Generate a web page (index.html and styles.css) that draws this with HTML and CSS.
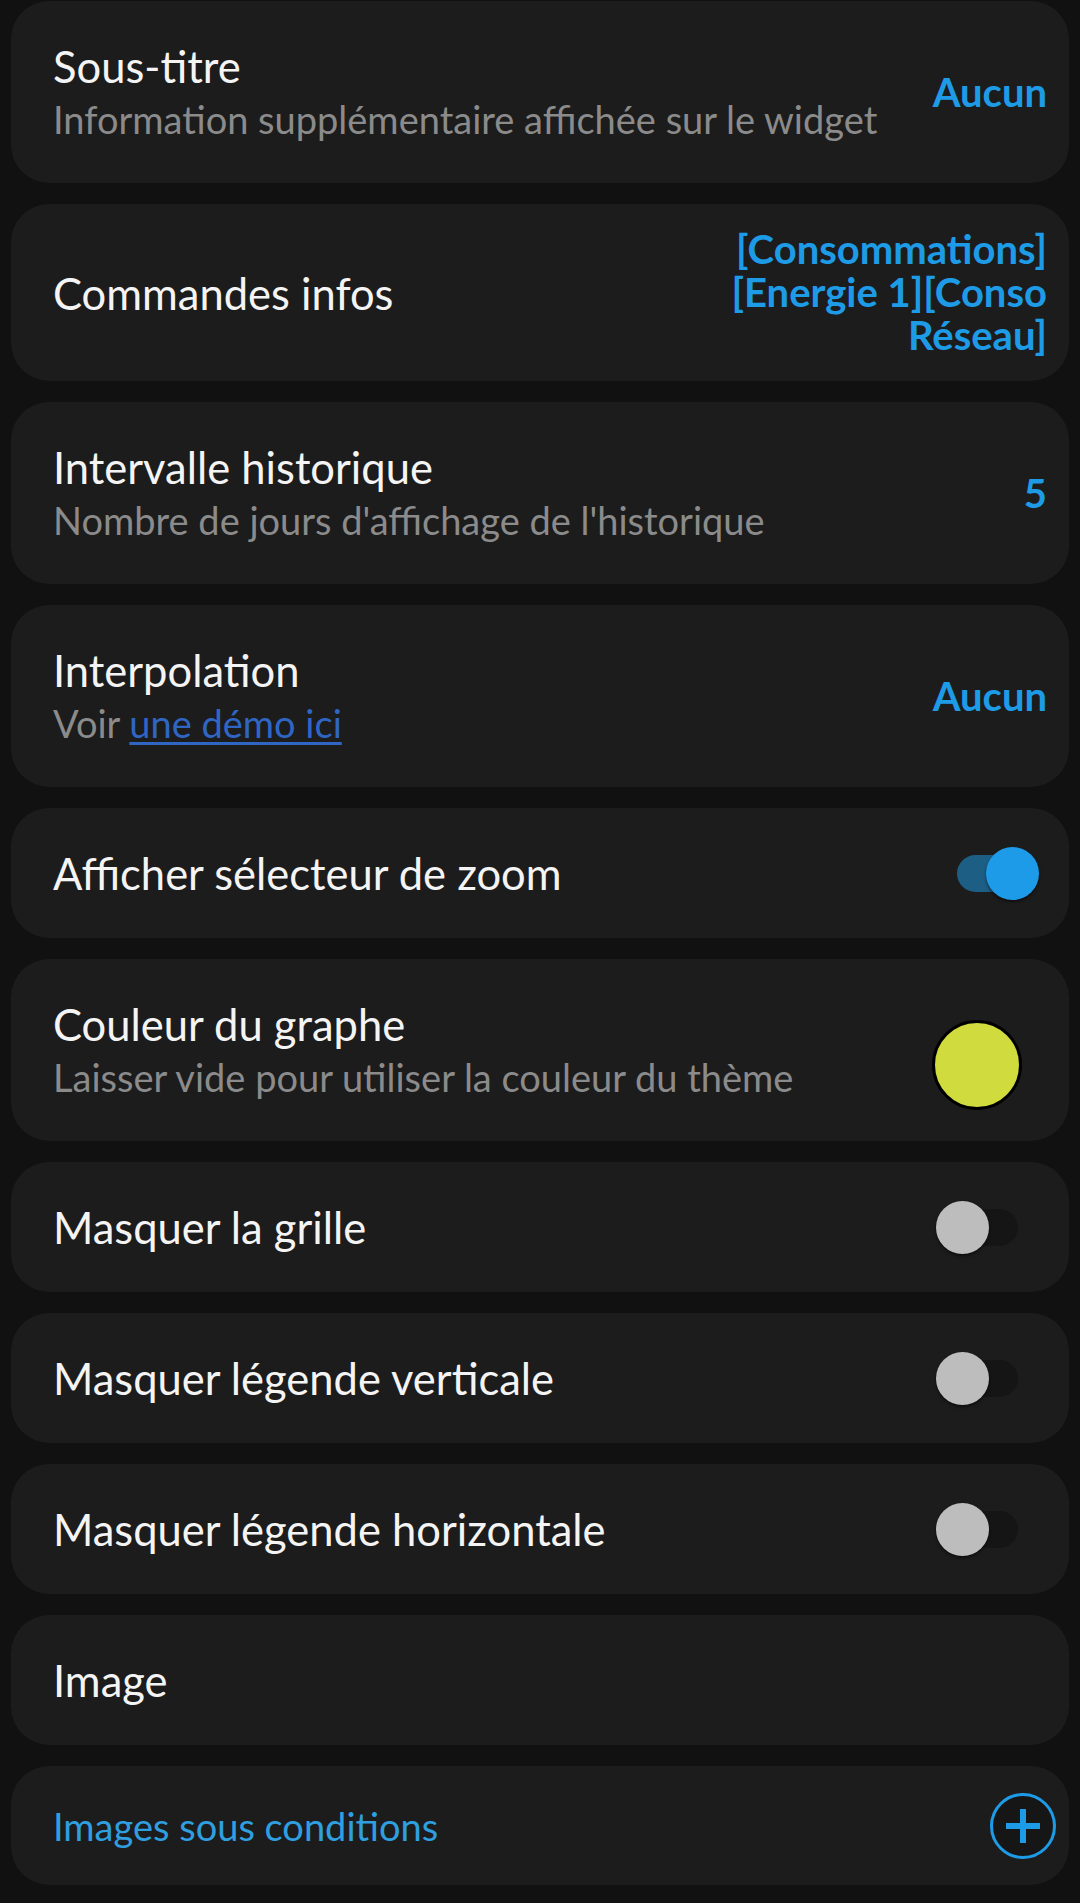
FILE: index.html
```html
<!DOCTYPE html>
<html lang="fr">
<head>
  <meta charset="UTF-8" />
  <meta name="viewport" content="width=device-width, initial-scale=1.0" />
  <title>Widget graphe</title>
  <link rel="stylesheet" href="styles.css">
</head>
<body>
  <div class="list">

    <div class="card">
      <div class="text">
        <div class="title">Sous-titre</div>
        <div class="sub">Information supplémentaire affichée sur le widget</div>
      </div>
      <div class="value">Aucun</div>
    </div>

    <div class="card">
      <div class="text">
        <div class="title">Commandes infos</div>
      </div>
      <div class="value multi">[Consommations]<br>[Energie 1][Conso<br>Réseau]</div>
    </div>

    <div class="card">
      <div class="text">
        <div class="title">Intervalle historique</div>
        <div class="sub">Nombre de jours d'affichage de l'historique</div>
      </div>
      <div class="value">5</div>
    </div>

    <div class="card">
      <div class="text">
        <div class="title">Interpolation</div>
        <div class="sub">Voir <a href="#" class="link">une démo ici</a></div>
      </div>
      <div class="value">Aucun</div>
    </div>

    <div class="card">
      <div class="text">
        <div class="title">Afficher sélecteur de zoom</div>
      </div>
      <div class="toggle on"><span class="track"></span><span class="thumb"></span></div>
    </div>

    <div class="card">
      <div class="text">
        <div class="title">Couleur du graphe</div>
        <div class="sub">Laisser vide pour utiliser la couleur du thème</div>
      </div>
      <div class="swatch"></div>
    </div>

    <div class="card">
      <div class="text">
        <div class="title">Masquer la grille</div>
      </div>
      <div class="toggle"><span class="track"></span><span class="thumb"></span></div>
    </div>

    <div class="card">
      <div class="text">
        <div class="title">Masquer légende verticale</div>
      </div>
      <div class="toggle"><span class="track"></span><span class="thumb"></span></div>
    </div>

    <div class="card">
      <div class="text">
        <div class="title">Masquer légende horizontale</div>
      </div>
      <div class="toggle"><span class="track"></span><span class="thumb"></span></div>
    </div>

    <div class="card">
      <div class="text">
        <div class="title">Image</div>
      </div>
    </div>

    <div class="card add-row">
      <div class="add-label">Images sous conditions</div>
      <svg class="add-btn" width="66" height="66" viewBox="0 0 66 66">
        <circle cx="33" cy="33" r="31.5" fill="#161616" stroke="#1e9be6" stroke-width="3"/>
        <path d="M16 33h34M33 16v34" stroke="#1e9be6" stroke-width="6"/>
      </svg>
    </div>

  </div>
</body>
</html>
```

FILE: styles.css
```css
body {
  margin: 0;
  background: #111111;
  font-family: Lato, "Open Sans", sans-serif;
  color: #f4f4f4;
}

.list {
  display: flex;
  flex-direction: column;
  gap: 21px;
  padding: 1px 11px 16px;
}

.card {
  background: #1c1c1c;
  border-radius: 38px;
  min-height: 130px;
  box-sizing: border-box;
  padding: 24px 22px 24px 42px;
  display: flex;
  align-items: center;
}

.text {
  flex: 1;
  padding: 14px 0;
}

.title {
  font-size: 43.5px;
  line-height: 54px;
}

.sub {
  font-size: 38px;
  line-height: 52px;
  color: #8b8b8b;
}

.link {
  color: #2f66c4;
  text-decoration: underline;
  text-underline-offset: 4px;
}

.value {
  color: #1e9be6;
  font-weight: bold;
  font-size: 40px;
  line-height: 43px;
  text-align: right;
}

.toggle {
  position: relative;
  width: 103px;
  height: 53px;
  margin-right: 8px;
}

.toggle .track {
  position: absolute;
  left: 21px;
  right: 21px;
  top: 8px;
  height: 37px;
  border-radius: 19px;
  background: #151515;
}

.toggle .thumb {
  position: absolute;
  top: 0;
  left: 0;
  width: 53px;
  height: 53px;
  border-radius: 50%;
  background: #bdbdbd;
  box-shadow: 0 2px 3px rgba(0, 0, 0, 0.5);
}

.toggle.on .track {
  background: #1d5e85;
}

.toggle.on .thumb {
  left: auto;
  right: 0;
  background: #1e9be8;
}

.swatch {
  width: 84px;
  height: 84px;
  border-radius: 50%;
  background: #d0dc3e;
  border: 3px solid #000;
  margin: 30px 25px 0 0;
}

.add-row {
  min-height: 119px;
  padding-top: 0;
  padding-bottom: 0;
  padding-right: 13px;
}

.add-label {
  flex: 1;
  color: #2f9fe0;
  font-size: 38px;
}
```
